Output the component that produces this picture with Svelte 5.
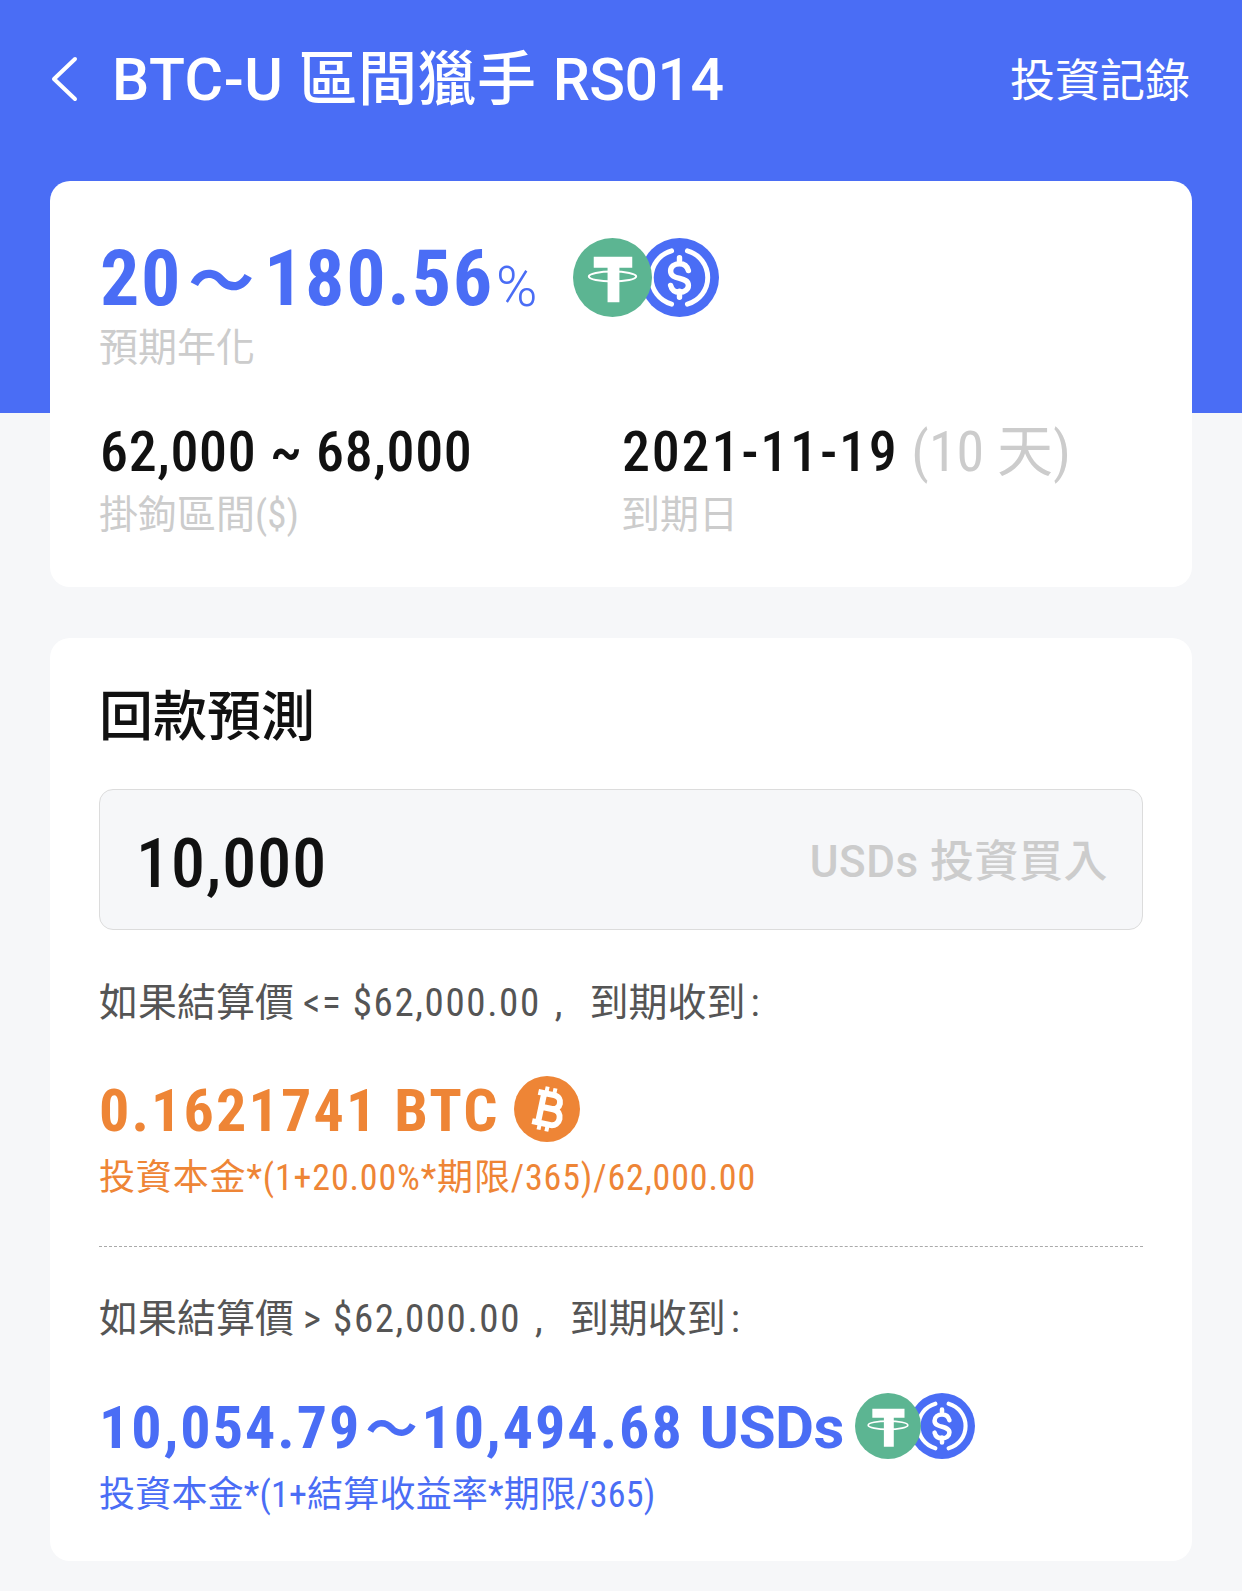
<script>
</script>

{#snippet coins(cls)}
	<span class="coins {cls}">
		<svg class="usdc" viewBox="0 0 80 80">
			<circle cx="40" cy="40" r="40" fill="#4a6df5" />
			<path d="M32 13A28 28 0 0 0 32 67M48 13A28 28 0 0 1 48 67" fill="none" stroke="#fff" stroke-width="5" stroke-linecap="round" />
			<path d="M49 33c-1-4-4-7-9-7s-9 3-9 7.500c0 10 18 5 18 14.500 0 4-4 7-9 7s-8-3-9-7M40 20v6M40 54v6" fill="none" stroke="#fff" stroke-width="5.500" stroke-linecap="round" />
		</svg>
		<svg class="usdt" viewBox="0 0 80 80">
			<circle cx="40" cy="40" r="40" fill="#5cb592" />
			<path d="M21 19h39v11H47v35H35V30H21z" fill="#fff" />
			<ellipse cx="40" cy="39" rx="24" ry="5" fill="none" stroke="#fff" stroke-width="2" />
		</svg>
	</span>
{/snippet}

<div class="page">
	<header class="top">
		<div class="title">
			<svg class="back" viewBox="0 0 28 46"><path d="M25 3 4 23l21 20" fill="none" stroke="#fff" stroke-width="4" stroke-linecap="round" stroke-linejoin="round" /></svg>
			<h1>BTC-U 區間獵手 <span class="code">RS014</span></h1>
		</div>
		<span class="record">投資記錄</span>
	</header>

	<section class="card summary">
		<div class="rate">
			<span class="big">20<span class="tilde">～</span>180.56</span><span class="pct">%</span>
			{@render coins('lg')}
		</div>
		<div class="muted rate-label">預期年化</div>
		<div class="stats">
			<div class="stat">
				<div class="val range">62,000 ~ 68,000</div>
				<div class="muted">掛鉤區間($)</div>
			</div>
			<div class="stat">
				<div class="val date">2021-11-19 <span class="days">(10 天)</span></div>
				<div class="muted">到期日</div>
			</div>
		</div>
	</section>

	<section class="card forecast">
		<h2>回款預測</h2>
		<div class="field">
			<span class="amount">10,000</span>
			<span class="unit">USDs 投資買入</span>
		</div>
		<p class="cond first">如果結算價 <span class="num">&lt;= $62,000.00</span><span class="comma">,</span>到期收到<span class="colon">:</span></p>
		<div class="result orange">
			<span class="figure">0.1621741 BTC</span>
			<svg class="btc" viewBox="0 0 66 66">
				<circle cx="33" cy="33" r="33" fill="#ee8536" />
				<g transform="rotate(12 33 33)" fill="none" stroke="#fff" stroke-width="6">
					<path d="M21 18h16c10 0 10 14 0 14H27M27 32h12c11 0 11 16 0 16H21M27 18v30" />
					<path d="M29 11v6M37 11v6M29 49v6M37 49v6" stroke-width="4" />
				</g>
			</svg>
		</div>
		<div class="formula orange">投資本金*(1+20.00%*期限/365)/62,000.00</div>
		<hr />
		<p class="cond">如果結算價 <span class="num">&gt; $62,000.00</span><span class="comma">,</span>到期收到<span class="colon">:</span></p>
		<div class="result blue">
			<span class="figure">10,054.79<span class="tilde">～</span>10,494.68 <span class="usds">USDs</span></span>
			{@render coins('sm')}
		</div>
		<div class="formula blue">投資本金*(1+結算收益率*期限/365)</div>
	</section>
</div>

<style>
	:global(body) {
		margin: 0;
		background: #f6f7f9;
	}

	.page {
		width: 1242px;
		height: 1591px;
		overflow: hidden;
		font-family: Roboto, "Noto Sans CJK TC", sans-serif;
		font-stretch: 85%;
		background: linear-gradient(#4a6df5 413px, #f6f7f9 413px);
	}

	.top {
		height: 181px;
		box-sizing: border-box;
		padding: 46px 52px 0 50px;
		display: flex;
		justify-content: space-between;
		align-items: flex-start;
		color: #fff;
	}

	.title {
		display: flex;
		align-items: center;
		gap: 34px;
	}

	.back {
		width: 28px;
		height: 46px;
	}

	h1 {
		margin: 2px 0 0;
		font-size: 59px;
		font-weight: 500;
		font-stretch: 100%;
		line-height: 64px;
		letter-spacing: 0.500px;
	}

	.code {
		letter-spacing: -0.500px;
		margin-left: 1px;
	}

	.record {
		font-size: 45px;
		line-height: 72px;
	}

	.card {
		margin: 0 50px;
		background: #fff;
		border-radius: 20px;
		box-sizing: border-box;
	}

	.summary {
		height: 406px;
		padding: 58px 50px 0;
	}

	.rate {
		display: flex;
		align-items: flex-end;
		height: 80px;
		color: #4a6df5;
	}

	.big {
		font-size: 78px;
		font-weight: 700;
		line-height: 80px;
		letter-spacing: 1.700px;
	}

	.big .tilde {
		font-size: 66px;
		line-height: 0;
		margin: 0 8px 0 6px;
	}

	.pct {
		font-size: 56px;
		font-weight: 300;
		font-stretch: 100%;
		line-height: 64px;
		margin-left: 2px;
	}

	.coins {
		position: relative;
		display: block;
	}

	.coins svg {
		position: absolute;
		top: 0;
	}

	.coins.lg {
		width: 146px;
		height: 80px;
		margin: -1px 0 0 36px;
		align-self: flex-start;
	}

	.coins.lg svg {
		width: 79px;
		height: 79px;
	}

	.coins.lg .usdc {
		left: 67px;
	}

	.coins.sm {
		width: 120px;
		height: 66px;
		margin-left: 11px;
	}

	.coins.sm svg {
		width: 66px;
		height: 66px;
	}

	.coins.sm .usdc {
		left: 54px;
	}

	.muted {
		font-size: 39px;
		color: #ccc;
		line-height: 50px;
		margin-left: -1px;
	}

	.rate-label {
		margin-top: 4px;
	}

	.stats {
		display: grid;
		grid-template-columns: 522px 1fr;
		margin-top: 46px;
	}

	.val {
		font-size: 56px;
		font-weight: 500;
		line-height: 66px;
		color: #111;
		margin-bottom: 5px;
	}

	.range {
		letter-spacing: 0.650px;
	}

	.date {
		letter-spacing: 1.800px;
	}

	.days {
		color: #ccc;
		font-weight: 400;
		letter-spacing: 0;
		margin-left: -2px;
	}

	.forecast {
		margin-top: 51px;
		height: 923px;
		padding: 48px 49px 0;
	}

	h2 {
		margin: 0;
		font-size: 54px;
		font-weight: 500;
		line-height: 64px;
		color: #111;
	}

	.field {
		margin-top: 39px;
		height: 141px;
		box-sizing: border-box;
		border: 1px solid #dcdcdc;
		border-radius: 14px;
		background: #f6f7f9;
		padding: 0 34px 0 36px;
		display: flex;
		justify-content: space-between;
		align-items: center;
	}

	.amount {
		font-size: 68px;
		font-weight: 500;
		color: #111;
		margin-top: 8px;
		letter-spacing: 1px;
	}

	.unit {
		font-size: 44px;
		font-weight: 500;
		font-stretch: 100%;
		letter-spacing: 0.500px;
		color: #ccc;
		margin-top: -4px;
	}

	.cond {
		margin: 0;
		font-size: 39px;
		line-height: 50px;
		color: #555;
		padding-top: 48px;
	}

	.num {
		letter-spacing: 1.600px;
	}

	.comma {
		margin: 0 27px 0 14px;
	}

	.colon {
		margin-left: 5px;
	}

	.result {
		display: flex;
		align-items: center;
		height: 66px;
		line-height: 66px;
		margin-top: 48px;
		font-size: 60px;
		font-weight: 700;
	}

	.result.blue {
		margin-top: 49px;
	}

	.figure {
		letter-spacing: 2px;
		margin-top: 4px;
	}

	.orange .figure {
		letter-spacing: 2.150px;
	}

	.figure .tilde {
		font-size: 52px;
		line-height: 0;
		letter-spacing: 0;
		margin: 0 4px;
	}

	.usds {
		font-stretch: 100%;
		letter-spacing: -0.500px;
	}

	.formula {
		font-size: 36px;
		line-height: 50px;
		margin-top: 11px;
		letter-spacing: 0.850px;
	}

	.formula.blue {
		letter-spacing: 0.200px;
	}

	.orange {
		color: #ee8536;
	}

	.blue {
		color: #4a6df5;
	}

	.btc {
		width: 66px;
		height: 66px;
		margin-left: 14px;
	}

	hr {
		border: 0;
		border-top: 1px dashed #aaa;
		margin: 43px 0 -1px;
	}
</style>
